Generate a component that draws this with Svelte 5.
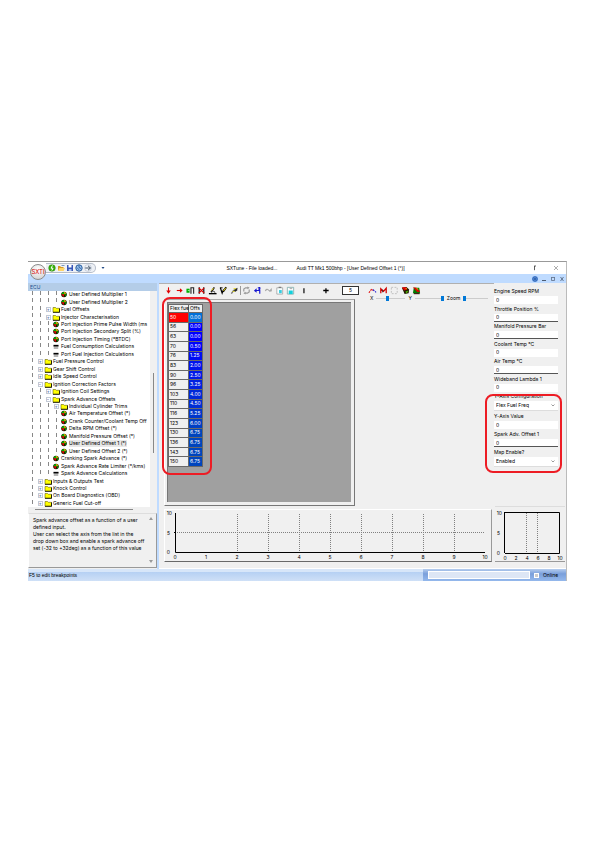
<script lang="ts">
	type Icon = 'map' | 'folder' | 'calc';

	type TreeRow = {
		depth: number;
		icon: Icon;
		label: string;
		toggle?: '+' | '-';
		selected?: boolean;
	};

	type Field = {
		id: string;
		label: string;
		value: string;
		select?: boolean;
		sunken?: boolean;
	};

	const TREE: TreeRow[] = [
		{ depth: 4, icon: 'map', label: 'User Defined Multiplier 1' },
		{ depth: 4, icon: 'map', label: 'User Defined Multiplier 2' },
		{ depth: 3, icon: 'folder', label: 'Fuel Offsets', toggle: '+' },
		{ depth: 3, icon: 'folder', label: 'Injector Characterisation', toggle: '+' },
		{ depth: 3, icon: 'map', label: 'Port Injection Prime Pulse Width (ms' },
		{ depth: 3, icon: 'map', label: 'Port Injection Secondary Split (%)' },
		{ depth: 3, icon: 'map', label: 'Port Injection Timing (°BTDC)' },
		{ depth: 3, icon: 'calc', label: 'Fuel Consumption Calculations' },
		{ depth: 3, icon: 'calc', label: 'Port Fuel Injection Calculations' },
		{ depth: 2, icon: 'folder', label: 'Fuel Pressure Control', toggle: '+' },
		{ depth: 2, icon: 'folder', label: 'Gear Shift Control', toggle: '+' },
		{ depth: 2, icon: 'folder', label: 'Idle Speed Control', toggle: '+' },
		{ depth: 2, icon: 'folder', label: 'Ignition Correction Factors', toggle: '-' },
		{ depth: 3, icon: 'folder', label: 'Ignition Coil Settings', toggle: '+' },
		{ depth: 3, icon: 'folder', label: 'Spark Advance Offsets', toggle: '-' },
		{ depth: 4, icon: 'folder', label: 'Individual Cylinder Trims', toggle: '+' },
		{ depth: 4, icon: 'map', label: 'Air Temperature Offset (°)' },
		{ depth: 4, icon: 'map', label: 'Crank Counter/Coolant Temp Off' },
		{ depth: 4, icon: 'map', label: 'Delta RPM Offset (°)' },
		{ depth: 4, icon: 'map', label: 'Manifold Pressure Offset (°)' },
		{ depth: 4, icon: 'map', label: 'User Defined Offset 1 (°)', selected: true },
		{ depth: 4, icon: 'map', label: 'User Defined Offset 2 (°)' },
		{ depth: 3, icon: 'map', label: 'Cranking Spark Advance (°)' },
		{ depth: 3, icon: 'map', label: 'Spark Advance Rate Limiter (°/kms)' },
		{ depth: 3, icon: 'calc', label: 'Spark Advance Calculations' },
		{ depth: 2, icon: 'folder', label: 'Inputs & Outputs Test', toggle: '+' },
		{ depth: 2, icon: 'folder', label: 'Knock Control', toggle: '+' },
		{ depth: 2, icon: 'folder', label: 'On Board Diagnostics (OBD)', toggle: '+' },
		{ depth: 2, icon: 'folder', label: 'Generic Fuel Cut-off', toggle: '+' }
	];

	const CELLS = [
		{ axis: '50', value: '0.00', color: '#0070d8' },
		{ axis: '56', value: '0.00', color: '#0000ff' },
		{ axis: '63', value: '0.00', color: '#0000ff' },
		{ axis: '70', value: '0.50', color: '#0004fa' },
		{ axis: '76', value: '1.25', color: '#000cf3' },
		{ axis: '83', value: '2.00', color: '#0014ec' },
		{ axis: '90', value: '2.50', color: '#0019e7' },
		{ axis: '96', value: '3.25', color: '#0021e0' },
		{ axis: '103', value: '4.00', color: '#0029d8' },
		{ axis: '110', value: '4.50', color: '#002ed4' },
		{ axis: '116', value: '5.25', color: '#0036cc' },
		{ axis: '123', value: '6.00', color: '#003ec4' },
		{ axis: '130', value: '6.75', color: '#0045bd' },
		{ axis: '136', value: '6.75', color: '#0045bd' },
		{ axis: '143', value: '6.75', color: '#0045bd' },
		{ axis: '150', value: '6.75', color: '#0045bd' }
	];

	const FIELDS: Field[] = [
		{ id: 'rpm', label: 'Engine Speed RPM', value: '0' },
		{ id: 'throttle', label: 'Throttle Position %', value: '0', sunken: true },
		{ id: 'manifold', label: 'Manifold Pressure Bar', value: '0', sunken: true },
		{ id: 'coolant', label: 'Coolant Temp °C', value: '0' },
		{ id: 'air', label: 'Air Temp °C', value: '0', sunken: true },
		{ id: 'lambda', label: 'Wideband Lambda 1', value: '0' }
	];

	const AXIS_FIELDS: Field[] = [
		{ id: 'yconfig', label: 'Y-Axis Configuration', value: 'Flex Fuel Freq', select: true },
		{ id: 'yvalue', label: 'Y-Axis Value', value: '0' },
		{ id: 'offset', label: 'Spark Adv. Offset 1', value: '0', sunken: true },
		{ id: 'enable', label: 'Map Enable?', value: 'Enabled', select: true }
	];

	const ticks = Array.from({ length: 11 }, (_, i) => i);
</script>

{#snippet field(f: Field)}
	<div class="field">
		<label for={f.id}>{f.label}</label>
		{#if f.select}
			<span class="select">
				<select id={f.id}><option>{f.value}</option></select>
				<svg viewBox="0 0 4 3"><path d="M0.5 0.5 L2 2 L3.5 0.5" /></svg>
			</span>
		{:else}
			<input id={f.id} class:sunken={f.sunken} type="text" value={f.value} />
		{/if}
	</div>
{/snippet}

{#snippet rowIcon(icon: Icon)}
	<svg class="row-icon" viewBox="0 0 8 7">
		{#if icon === 'folder'}
			<path d="M1 1.5 H3.5 L4.3 2.3 H7.5 V6.3 H1 Z" fill="#ffff00" stroke="#4b4400" stroke-width="0.5" />
			<path d="M1 6.3 H7.5 V2.5" fill="none" stroke="#000" stroke-width="0.8" />
		{:else if icon === 'map'}
			<circle cx="4" cy="3.5" r="2.8" fill="#1b1b00" />
			<path d="M1.3 2.5 L4 0.8 L4 4 Z" fill="#00b000" />
			<path d="M4 0.7 L6.2 2 L4.5 3.7 Z" fill="#f0d000" />
			<path d="M1.3 3.2 L4.2 3.2 L3.7 6 Z" fill="#f00000" />
			<path d="M4.8 3.3 H6.8 L5.4 5.6 Z" fill="#00a000" />
		{:else}
			<path d="M1.5 1 H6.5 V6 H1.5 Z" fill="#d8d8d8" />
			<path d="M1.5 2 H6.5 V3.5 H1.5 Z" fill="#000" />
			<path d="M2 5 H6" stroke="#777" stroke-width="0.7" />
		{/if}
	</svg>
{/snippet}

<div class="page">
	<div class="window">
		<header class="titlebar">
			<button class="orb" aria-label="Application menu">SXTI</button>
			<div class="quick">
				<button aria-label="Connect">
					<svg viewBox="0 0 8 8"><circle cx="4" cy="4" r="3.3" fill="#36b30c" stroke="#267d0a" stroke-width="0.5" /><path d="M4.5 1.5 L3 4.2 H5 L3.8 6.5" fill="none" stroke="#fff" /></svg>
				</button>
				<button aria-label="Open">
					<svg viewBox="0 0 8 8"><path d="M1 2 H3 L4 3 H6.5 V6.5 H1 Z" fill="#d69a24" /><path d="M2.3 4 H8 L6.5 7 H1 Z" fill="#ffd565" /><path d="M4.5 1.5 H7.5" stroke="#7999bd" /></svg>
				</button>
				<button aria-label="Save">
					<svg viewBox="0 0 8 8"><path d="M1 1 H7 V7 H1 Z" fill="#3856b8" /><path d="M2.5 1 H5.5 V3.5 H2.5 Z" fill="#fff" /><path d="M2.7 5 H5.5 V7 H2.7 Z" fill="#a9c1ee" /></svg>
				</button>
				<button aria-label="Settings">
					<svg viewBox="0 0 8 8"><circle cx="4" cy="4" r="3.2" fill="#9cc4ee" stroke="#295d9d" /><path d="M4 1.3 V3.5 L6 4.5 M2 3.5 L4 5.8" stroke="#1b4b92" stroke-width="0.8" fill="none" /></svg>
				</button>
				<button aria-label="Exit">
					<svg viewBox="0 0 8 8"><circle cx="4" cy="4" r="3.4" fill="#f0f4fa" stroke="#a5afc0" stroke-width="0.5" /><path d="M1.2 4 H6.3 M4 1.8 L6.5 4 L4 6.2" fill="none" stroke="#37475b" stroke-width="0.9" /></svg>
				</button>
			</div>
			<svg class="more" viewBox="0 0 4 4"><path d="M0.5 1 H3.5 L2 3 Z" fill="#234a86" /></svg>
			<h1>
				<span>SXTune - File loaded...</span>
				<span>Audi TT Mk1 500bhp - [User Defined Offset 1 (°)]</span>
			</h1>
			<div class="caption">
				<button aria-label="Maximise"><svg viewBox="0 0 6 6"><path d="M2.5 0.8 V5.2 M2.5 1 H4" fill="none" stroke="#333" stroke-width="0.8" /></svg></button>
				<button aria-label="Close"><svg viewBox="0 0 6 6"><path d="M1 1 L5 5 M5 1 L1 5" stroke="#777" stroke-width="0.6" /></svg></button>
			</div>
		</header>

		<div class="ribbon">
			<svg viewBox="0 0 8 8"><circle cx="4" cy="4" r="3" fill="#5b8fda" /><path d="M1 4 H7 M4 1 V7 M2 2 L6 6 M6 2 L2 6" stroke="#2f62ad" stroke-width="0.7" /></svg>
			<svg viewBox="0 0 8 8"><path d="M2 5.5 H6" stroke="#4d5d74" /></svg>
			<svg viewBox="0 0 8 8"><path d="M2 2.5 H6 M2.5 2.5 V5.5 H5.5 V2.5" fill="none" stroke="#5d6d86" stroke-width="0.8" /></svg>
			<svg viewBox="0 0 8 8"><path d="M2.5 2 L5.5 6 M5.5 2 L2.5 6" stroke="#4d5d74" stroke-width="0.8" /></svg>
		</div>

		<div class="body">
			<aside>
				<h2>ECU</h2>
				<div class="tree-box">
					<ul class="tree">
						{#each TREE as row}
							<li>
								{#each { length: row.depth } as _, i}
									{#if i === row.depth - 1 && row.toggle}
										<span class="cell"><span class="toggle">{row.toggle}</span></span>
									{:else}
										<span class="cell guide"></span>
									{/if}
								{/each}
								{@render rowIcon(row.icon)}
								<span class:selected={row.selected}>{row.label}</span>
							</li>
						{/each}
					</ul>
					<div class="vscroll"><span></span></div>
				</div>
				<div class="hscroll"><span></span></div>
				<div class="help">
					<p>
						Spark advance offset as a function of a user<br />
						defined input.<br />
						User can select the axis from the list in the<br />
						drop down box and enable a spark advance off<br />
						set (-32 to +32deg) as a function of this value
					</p>
					<div class="help-scroll">
						<svg viewBox="0 0 4 3"><path d="M0 3 L2 0 L4 3 Z" fill="#999" /></svg>
						<svg viewBox="0 0 4 3"><path d="M0 0 L2 3 L4 0 Z" fill="#999" /></svg>
					</div>
				</div>
			</aside>

			<main>
				<div class="upper">
					<div class="work">
						<div class="toolbar">
							<button aria-label="Fill down"><svg viewBox="0 0 10 10"><path d="M5 1.5 V7" stroke="#e00000" stroke-width="1.2" /><path d="M2.5 5 H7.5 L5 8.5 Z" fill="#e00000" /></svg></button>
							<button aria-label="Fill right"><svg viewBox="0 0 10 10"><path d="M2 5 H7" stroke="#e00000" stroke-width="1.2" /><path d="M5.5 2.5 L8.5 5 L5.5 7.5 Z" fill="#e00000" /></svg></button>
							<button aria-label="Insert column"><svg viewBox="0 0 10 10"><path d="M0.5 3 H4 V7.5 H0.5 Z" fill="#00b000" /><path d="M5.5 1.5 V8.5 M8.5 1.5 V8.5 M5 2 H9" stroke="#222" stroke-width="1.2" fill="none" /><path d="M2 5 H4" stroke="#b6ffb6" stroke-width="0.8" /></svg></button>
							<button aria-label="Delete column"><svg viewBox="0 0 10 10"><path d="M2.5 1.5 V8.5 M7.5 1.5 V8.5" stroke="#222" stroke-width="1.5" /><path d="M2 2 L8 8 M8 2 L2 8" stroke="#e00000" stroke-width="1.3" /></svg></button>
							<button aria-label="Edit"><svg viewBox="0 0 10 10"><path d="M1 8.5 H9.5" stroke="#000" stroke-width="1.5" /><path d="M3.5 7 L7 1.5" stroke="#222" stroke-width="1.8" /><path d="M4 5 L6 2.5" stroke="#e8cf00" stroke-width="1.1" /><path d="M6 6 L8 7" stroke="#000" /></svg></button>
							<button aria-label="Edit axis"><svg viewBox="0 0 10 10"><path d="M1.5 2 L3.5 8 L5 4" fill="none" stroke="#000" stroke-width="1.3" /><path d="M4.5 6.5 L8 1.5" stroke="#000" stroke-width="2" /><path d="M5 5.5 L7.5 2" stroke="#e8cf00" stroke-width="1.1" /><path d="M1 2 H4" stroke="#000" /></svg></button>
							<button aria-label="Highlight"><svg viewBox="0 0 10 10"><path d="M1.5 8.5 L4 5 L8.5 2.5" fill="none" stroke="#777" stroke-width="1.5" /><path d="M4 5.5 L7 2.5 L8.5 4.5 L6 6.5 Z" fill="#222" /><path d="M4 3 H6.5 M3 6 L5 6" stroke="#e8dc00" /></svg></button>
							<span class="rule"></span>
							<button aria-label="Refresh"><svg viewBox="0 0 10 10"><path d="M2 6 V3.5 L4 2 H7 M8 4 V6.5 L6 8 H3" fill="none" stroke="#999" stroke-width="1.3" /><path d="M6 0.5 L8.5 2 L6 3.5 Z M4 6.5 L1.5 8 L4 9.5 Z" fill="#999" /></svg></button>
							<button aria-label="Undo"><svg viewBox="0 0 10 10"><path d="M2.5 5 H6 Q8.3 3 7.5 1.8 Q6.5 1.5 5.5 2.5 M7.5 4 V8.5" fill="none" stroke="#1818d0" stroke-width="1.3" /><path d="M1 5.2 L4 2.5 V7.5 Z" fill="#1818d0" /></svg></button>
							<button aria-label="Redo"><svg viewBox="0 0 10 10"><path d="M1.5 5.5 Q3 2.5 5 4.5 Q6.5 6.5 8.5 4" fill="none" stroke="#a8a8a8" stroke-width="1.2" /><path d="M8.5 2 V6 H5.5 Z" fill="#a8a8a8" /></svg></button>
							<button aria-label="Paste"><svg viewBox="0 0 10 10"><path d="M2 2 H8.5 V9 H2 Z" fill="#f7ffff" stroke="#999" stroke-width="0.8" /><path d="M4 1.5 H7" stroke="#777" stroke-width="1.3" /><path d="M4.5 4.5 H7.5 V8 H4.5 Z" fill="#35cce0" /></svg></button>
							<button aria-label="Store"><svg viewBox="0 0 10 10"><path d="M1.5 1.5 H8.5 V9 H1.5 Z" fill="#fff" stroke="#79a9a9" stroke-width="0.9" /><path d="M3 5 H7.5 V9 H3 Z" fill="#13cfdb" /><path d="M4 2 H7 V3.5 H4 Z" fill="#b5b5b5" /></svg></button>
							<span class="gap"></span>
							<button aria-label="Interpolate"><svg viewBox="0 0 10 10"><path d="M5.5 2.5 V8" stroke="#000" stroke-width="1.3" /></svg></button>
							<span class="blank"></span>
							<button aria-label="Add"><svg viewBox="0 0 10 10"><path d="M5.5 2.5 V8 M2.5 5 H8.5" stroke="#000" stroke-width="1.4" /></svg></button>
							<input class="step" type="text" value="5" aria-label="Step" />
							<button aria-label="Graph"><svg viewBox="0 0 10 10"><path d="M1 7.5 L4 3.5 L6 5" fill="none" stroke="#e00000" stroke-width="1.2" stroke-dasharray="2 1" /><path d="M5.5 4 L9 7" stroke="#1818d0" stroke-width="1.2" stroke-dasharray="2 1" /></svg></button>
							<button aria-label="Markers"><svg viewBox="0 0 10 10"><path d="M2 8 V3 L5 6 L8 2.5 V8" fill="none" stroke="#d00000" stroke-width="1.4" /><path d="M4 4 V7" stroke="#333" /></svg></button>
							<button aria-label="Fit"><svg viewBox="0 0 10 10"><path d="M1.5 1.5 H8 V8.5 H1.5 Z" fill="none" stroke="#bbb" stroke-dasharray="2 1.5" /></svg></button>
							<button aria-label="3D map"><svg viewBox="0 0 10 10"><path d="M1 2 L6 1 L9 4 L8.5 8 L4 9 Z" fill="#211800" /><path d="M1 1.5 L6 1.5 L7 4 L3.5 5 Z" fill="#e00000" /><path d="M5 6 L8.5 5 L6 8.5 Z" fill="#4caf00" /><path d="M5 3 H6.5" stroke="#e8cf00" /></svg></button>
							<button aria-label="2D map"><svg viewBox="0 0 10 10"><path d="M2 2 H8 L9 8 H1 Z" fill="#007a00" /><path d="M1 1.5 L5 2 L9 6 L6 7 Z" fill="#d80000" /><path d="M2 8.5 H8.5" stroke="#2a1200" stroke-width="1.2" /><path d="M5 3 L7 3.5" stroke="#f0d000" /></svg></button>
						</div>

						<div class="table-area">
							<div class="table-frame">
								<div class="table-well">
									<table>
										<thead>
											<tr><th>Flex fue</th><th>Offs</th></tr>
										</thead>
										<tbody>
											{#each CELLS as cell, i}
												<tr>
													<th class:active={i === 0}>{cell.axis}</th>
													<td style="background: {cell.color}">{cell.value}</td>
												</tr>
											{/each}
										</tbody>
									</table>
									<div class="mark mark-table"></div>
								</div>
							</div>
							<div class="sliders">
								<label for="sx">X</label>
								<input id="sx" type="range" value="35" />
								<label for="sy">Y</label>
								<input id="sy" type="range" value="100" />
								<label for="zoom">Zoom</label>
								<input id="zoom" type="range" value="0" />
							</div>
						</div>
					</div>

					<div class="gauges">
						<div class="live">
							{#each FIELDS as f}{@render field(f)}{/each}
						</div>
						<div class="axis-group">
							{#each AXIS_FIELDS as f}{@render field(f)}{/each}
							<div class="mark mark-axis"></div>
						</div>
					</div>
				</div>

				<div class="lower">
					<div class="chart wide">
						<svg viewBox="0 1 326 51" aria-label="Offset curve" role="img">
							{#each ticks as t}
								{#if t > 1 && t < 10}
									<line class="grid" x1={10.5 + t * 31} y1="5" x2={10.5 + t * 31} y2="43" />
								{/if}
								<text x={10 + t * 31} y="50" text-anchor="middle">{t}</text>
							{/each}
							<line class="grid" x1="10" y1="23.5" x2="320" y2="23.5" />
							<path class="axis" d="M10.5 4 V43.5 H320 M9 23.5 H11" />
							<text x="7" y="6" text-anchor="end">10</text>
							<text x="5" y="26" text-anchor="end">5</text>
							<text x="5" y="45" text-anchor="end">0</text>
						</svg>
					</div>
					<div class="chart small">
						<svg viewBox="0 2 70 54" aria-label="Live trace" role="img">
							<path class="axis" d="M9 7.5 H64.5 V48.5 H10 M9.5 7 V48" />
							<line class="grid" x1="31.5" y1="8" x2="31.5" y2="48" />
							<line class="grid" x1="42.5" y1="8" x2="42.5" y2="48" />
							{#each [0, 2, 4, 6, 8, 10] as t}
								<text x={10 + t * 5.5} y="55" text-anchor="middle">{t}</text>
							{/each}
							<text x="7" y="10" text-anchor="end">10</text>
							<text x="5" y="30" text-anchor="end">5</text>
							<text x="5" y="50" text-anchor="end">0</text>
						</svg>
					</div>
				</div>
			</main>
		</div>

		<footer>
			<span class="status">F5 to edit breakpoints</span>
			<div class="online">
				<span class="progress"></span>
				<span class="pc"></span>
				<span>Online</span>
			</div>
		</footer>
	</div>
</div>

<style>
	:global(body) {
		margin: 0;
		background: #fff;
	}

	.page {
		padding: 261px 28px;
		font-family: Inter, 'Open Sans', sans-serif;
		font-size: 5px;
		line-height: 7px;
		color: #000;
	}

	.page * {
		box-sizing: border-box;
	}

	button,
	input,
	select {
		border: 0;
		padding: 0;
		margin: 0;
		background: none;
		font: inherit;
		color: inherit;
		border-radius: 0;
	}

	svg {
		display: block;
		flex: none;
	}

	h1,
	h2,
	p,
	ul {
		margin: 0;
		padding: 0;
		font-size: 5px;
		font-weight: 400;
	}

	.window {
		border-top: 1px solid #999;
		border-right: 1px solid #bbb;
		background: #f0f0f0;
	}

	.titlebar {
		display: flex;
		align-items: center;
		height: 12px;
		background: #fff;
	}

	.orb {
		position: relative;
		top: 4px;
		flex: none;
		width: 16px;
		height: 16px;
		margin-left: 2px;
		border: 1px solid #8b8b8b;
		border-radius: 50%;
		background: radial-gradient(circle at 50% 30%, #fff, #ccc);
		color: #d80000;
		font-size: 6px;
		line-height: 14px;
		text-align: center;
	}

	.quick {
		display: flex;
		align-items: center;
		gap: 1px;
		height: 10px;
		padding: 0 3px 0 2px;
		border: 1px solid #b5bcc8;
		border-left: 0;
		border-radius: 0 5px 5px 0;
		background: #eef1f6;
	}

	.quick svg {
		width: 8px;
		height: 8px;
	}

	.more {
		width: 4px;
		height: 4px;
		margin-left: 5px;
	}

	h1 {
		display: flex;
		flex: 1;
		justify-content: center;
		gap: 19px;
		padding-right: 6px;
		font-family: 'Liberation Sans', Arial, sans-serif;
		white-space: nowrap;
	}

	.caption {
		display: flex;
		gap: 15px;
		padding-right: 7px;
	}

	.caption svg {
		width: 6px;
		height: 6px;
	}

	.ribbon {
		display: flex;
		justify-content: flex-end;
		align-items: center;
		gap: 1px;
		height: 9px;
		background: #bfdbff;
	}

	.ribbon svg {
		width: 8px;
		height: 8px;
	}

	.body {
		display: flex;
	}

	aside {
		flex: none;
		width: 131px;
		border-right: 2px solid #bfdbff;
	}

	h2 {
		height: 8px;
		padding-left: 2px;
		line-height: 8px;
		background: #b4cde8;
		color: #1d4f91;
	}

	.tree-box {
		display: flex;
		height: 216px;
		background: #fff;
	}

	.tree {
		flex: 1;
		display: flex;
		flex-direction: column;
		min-width: 0;
		overflow: hidden;
		list-style: none;
	}

	.tree li {
		flex: 1;
		display: flex;
		align-items: center;
		min-height: 0;
		white-space: nowrap;
	}

	.cell {
		display: flex;
		flex: none;
		justify-content: center;
		align-items: center;
		align-self: stretch;
		width: 8px;
	}

	.guide {
		background: linear-gradient(#888 0 4px, transparent 4px) center / 1px 100% no-repeat;
	}

	.toggle {
		width: 5px;
		height: 5px;
		border: 1px solid #c3cad6;
		line-height: 3px;
		color: #1c3c8c;
		text-align: center;
	}

	.row-icon {
		width: 8px;
		height: 7px;
		margin-right: 1px;
	}

	.selected {
		background: #e8e8e8;
	}

	.vscroll {
		width: 7px;
		padding: 82px 3px 0;
		background: #f0f0f0;
	}

	.vscroll span {
		display: block;
		height: 80px;
		background: #888;
	}

	.hscroll {
		height: 6px;
		padding: 2px 24px 0 7px;
	}

	.hscroll span {
		display: block;
		height: 1px;
		background: #888;
	}

	.help {
		display: flex;
		height: 55px;
		padding: 3px 3px 4px 4px;
		border: 1px solid #999;
		border-left-color: #fff;
		border-top-color: #ddd;
	}

	.help p {
		flex: 1;
		white-space: nowrap;
	}

	.help-scroll {
		display: flex;
		flex-direction: column;
		justify-content: space-between;
	}

	.help-scroll svg {
		width: 4px;
		height: 3px;
	}

	main {
		flex: 1;
		display: flex;
		flex-direction: column;
		min-width: 0;
		padding-right: 1px;
		border-bottom: 1px solid #fff;
	}

	.upper {
		display: flex;
	}

	.work {
		flex: 1;
		min-width: 0;
	}

	.toolbar {
		display: flex;
		align-items: center;
		height: 12px;
		padding: 1px 0 0 4px;
		border-top: 1px solid #b0b0b0;
	}

	.toolbar button,
	.blank {
		flex: none;
		width: 11px;
	}

	.toolbar svg {
		width: 9px;
		height: 9px;
		margin: 0 auto;
	}

	.gap {
		width: 2px;
	}

	.rule {
		width: 1px;
		height: 9px;
		background: #999;
	}

	.step {
		width: 17px;
		height: 9px;
		margin: 0 8px 0 11px;
		border: 1px solid #333;
		background: #fff;
		text-align: center;
	}

	.table-area {
		display: flex;
		align-items: flex-start;
	}

	.table-frame {
		width: 191px;
		margin: 4px 0 0 5px;
		padding: 2px 3px 3px 2px;
		border: 1px solid #777;
		border-top-color: #aaa;
		border-left-color: #fff;
	}

	.table-well {
		position: relative;
		height: 200px;
		padding-top: 1px;
		border-top: 1px solid #777;
		border-left: 1px solid #777;
		background: #a0a0a0;
	}

	table {
		width: 35px;
		height: 163px;
		border-collapse: separate;
		border-spacing: 1px;
		table-layout: fixed;
		background: #696969;
		line-height: 7px;
	}

	th,
	td {
		padding: 0 0 0 1px;
		background: #f0f0f0;
		font-weight: 400;
		text-align: left;
		white-space: nowrap;
	}

	th:first-child {
		width: 19px;
	}

	td {
		color: #fff;
	}

	th.active {
		background: #ff0000;
		color: #fff;
	}

	.mark {
		position: absolute;
		border: 2px solid #ed1c24;
		border-radius: 8px;
		pointer-events: none;
	}

	.mark-table {
		top: -6px;
		left: -6px;
		width: 50px;
		height: 178px;
	}

	.sliders {
		display: flex;
		align-items: center;
		gap: 3px;
		height: 6px;
		margin-left: 15px;
	}

	.sliders input {
		appearance: none;
		width: 29px;
		height: 5px;
		background: linear-gradient(#ccc, #ccc) center / 100% 1px no-repeat;
	}

	.sliders #zoom {
		width: 25px;
	}

	.sliders input::-webkit-slider-thumb {
		appearance: none;
		width: 3px;
		height: 5px;
		background: #0078d7;
	}

	.gauges {
		width: 71px;
		padding: 4px 7px 0 0;
	}

	.live {
		display: flex;
		flex-direction: column;
		justify-content: space-between;
		height: 105px;
	}

	.field {
		display: flex;
		flex-direction: column;
	}

	.field label {
		height: 9px;
		line-height: 9px;
		white-space: nowrap;
	}

	.field input {
		width: 100%;
		height: 8px;
		padding: 0 2px;
		border-bottom: 1px solid #fff;
		background: #fff;
	}

	.field .sunken {
		border-bottom-color: #555;
	}

	.axis-group {
		position: relative;
		display: flex;
		flex-direction: column;
		gap: 1px;
	}

	.mark-axis {
		top: 2px;
		left: -9px;
		width: 77px;
		height: 79px;
	}

	.select {
		display: flex;
		align-items: center;
		height: 10px;
		padding-right: 3px;
		border-bottom: 1px solid #ddd;
		background: #fff;
	}

	.select select {
		appearance: none;
		flex: 1;
		height: 9px;
		padding-left: 2px;
	}

	.select svg {
		width: 4px;
		height: 3px;
		fill: none;
		stroke: #555;
		stroke-width: 0.6;
	}

	.lower {
		display: flex;
		align-items: flex-end;
		gap: 3px;
		padding: 0 0 6px 5px;
	}

	.chart svg {
		width: 100%;
		overflow: visible;
	}

	.wide {
		flex: 1;
		border: 1px solid #fff;
		border-right-color: #999;
		border-bottom-color: #696969;
	}

	.small {
		width: 70px;
		border-top: 1px solid #ddd;
		border-bottom: 1px solid #999;
	}

	.chart text {
		font-size: 5px;
	}

	.axis {
		fill: none;
		stroke: #000;
	}

	.grid {
		stroke: #808080;
		stroke-dasharray: 1 1;
	}

	footer {
		display: flex;
		justify-content: space-between;
		align-items: center;
		height: 12px;
		background: linear-gradient(#d7e6f9 0 3px, #b5d0f3 3px, #cfe0f7);
	}

	.status {
		padding-left: 1px;
		font-family: 'Liberation Sans', Arial, sans-serif;
	}

	.online {
		display: flex;
		align-items: center;
		align-self: stretch;
		gap: 4px;
		width: 143px;
		padding-left: 5px;
		background: linear-gradient(#b5cdee, #7a9fdb 40%, #94b8ec);
	}

	.progress {
		width: 102px;
		height: 8px;
		border: 1px solid #fff;
		background: #dde6f5;
	}

	.pc {
		width: 5px;
		height: 5px;
		border: 1px solid #fff;
		background: #ccc;
	}
</style>
